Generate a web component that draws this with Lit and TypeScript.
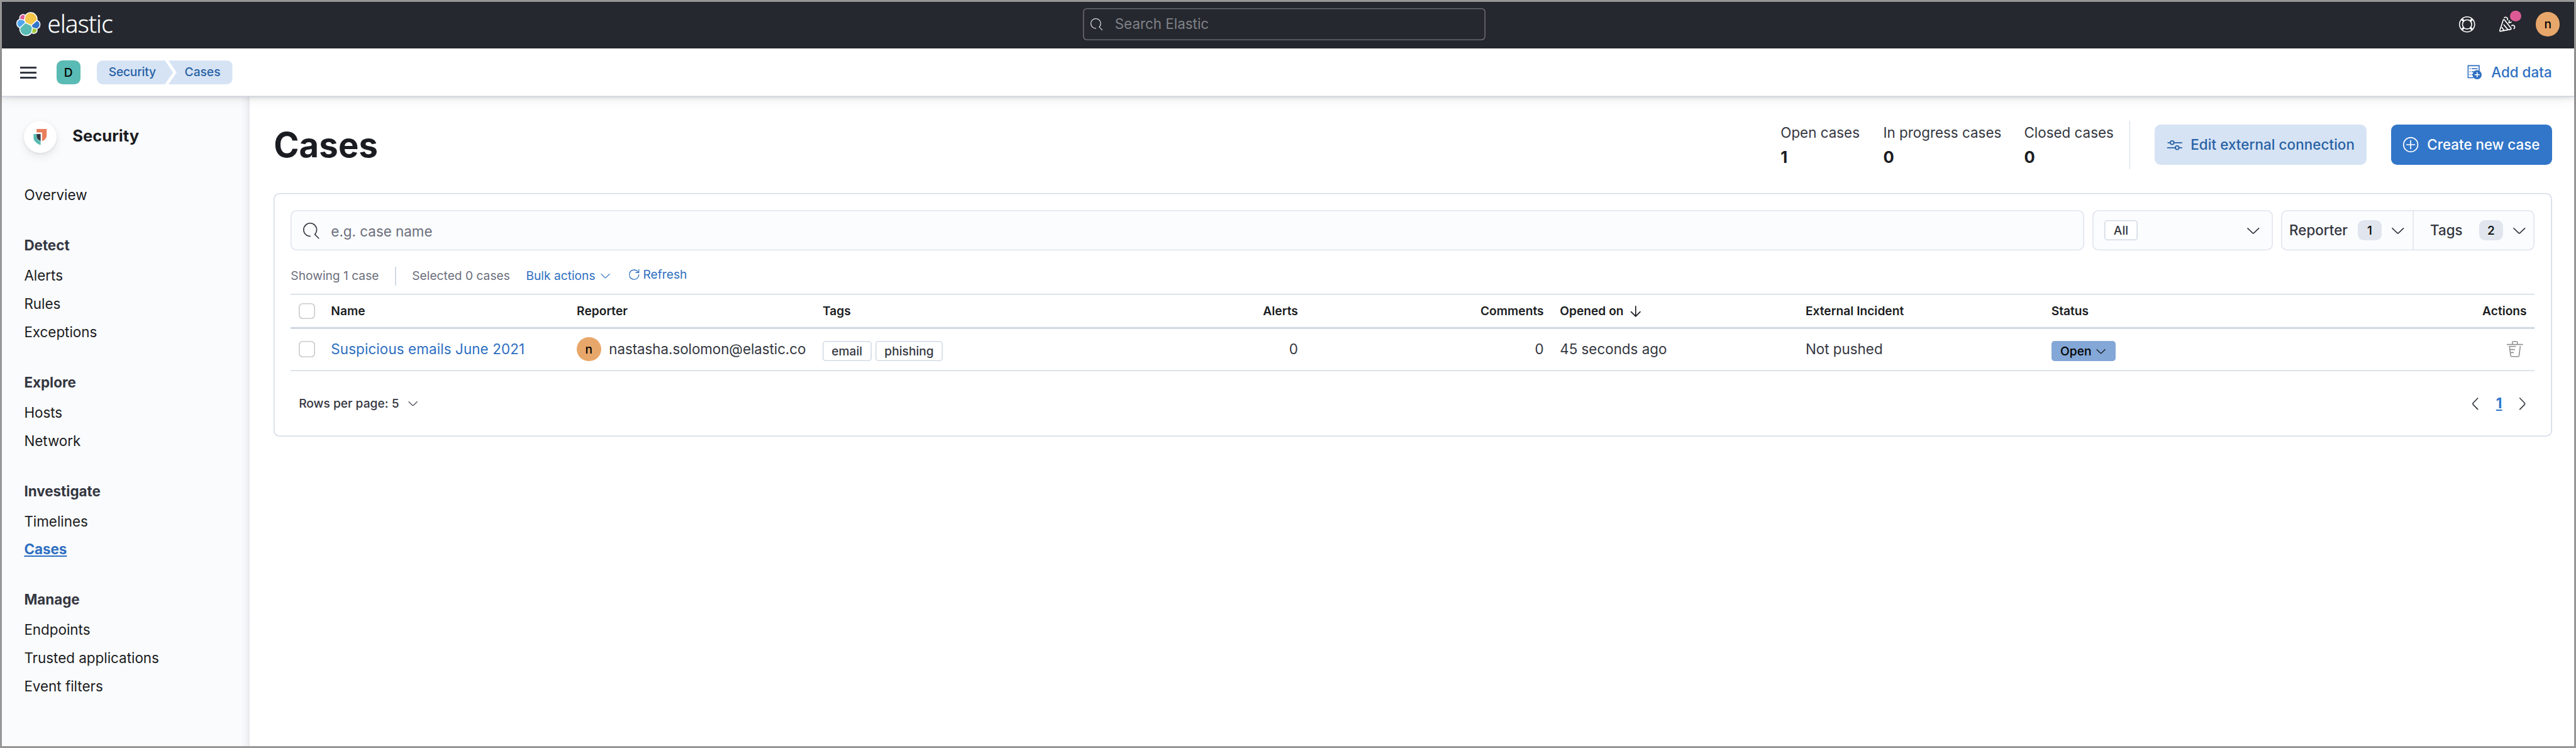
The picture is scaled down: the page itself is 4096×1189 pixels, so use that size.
import { LitElement, html, css, svg } from "lit";
import { customElement } from "lit/decorators.js";

const icon = (cls: string, body: unknown, box = "0 0 16 16") =>
  html`<svg class="icon ${cls}" viewBox=${box} aria-hidden="true">${body}</svg>`;

const searchGlyph = svg`<path fill="currentColor" d="M11.271 11.978l3.872 3.873a.502.502 0 00.708 0 .502.502 0 000-.708l-3.565-3.564c2.38-2.747 2.267-6.923-.342-9.532-2.73-2.73-7.17-2.73-9.898 0-2.728 2.729-2.728 7.17 0 9.9a6.955 6.955 0 004.949 2.05.5.5 0 000-1 5.96 5.96 0 01-4.242-1.757 6.01 6.01 0 010-8.486 6.004 6.004 0 018.484 0 6.01 6.01 0 010 8.486.5.5 0 00.034.738z"/>`;
const chevronDown = svg`<path class="line" d="M2.5 5.5l4.7 4.6a1.15 1.15 0 001.6 0l4.7-4.6"/>`;
const chevronLeft = svg`<path class="line" d="M10.5 2.5L5.9 7.2a1.15 1.15 0 000 1.6l4.6 4.7"/>`;
const chevronRight = svg`<path class="line" d="M5.5 2.5l4.6 4.7a1.15 1.15 0 010 1.6l-4.6 4.7"/>`;

const clusterPaths = [
  ["#f4c64a", "M12.58 13.787l7.002 3.211 7.066-6.213a7.849 7.849 0 00.152-1.557c0-4.311-3.51-7.817-7.826-7.817a7.825 7.825 0 00-6.453 3.394l-1.176 6.109 1.235 2.873z"],
  ["#59bbb3", "M5.333 21.214c-.094.511-.14 1.03-.14 1.55 0 4.325 3.52 7.843 7.849 7.843a7.84 7.84 0 006.486-3.438l1.166-6.08-1.556-2.977-7.03-3.203-6.775 6.305z"],
  ["#df5c9a", "M5.288 9.067l4.8 1.132 1.05-5.457a3.79 3.79 0 00-6.017 3.01c0 .444.017.896.167 1.315z"],
  ["#50a6ed", "M4.872 10.214c-2.145.71-3.598 2.778-3.598 5.04a5.32 5.32 0 003.408 4.95l6.734-6.087-1.236-2.642-5.308-1.261z"],
  ["#9dc93f", "M20.873 27.169a3.78 3.78 0 006.007-3.01c0-.44-.075-.876-.223-1.29l-4.796-1.121-.988 5.421z"],
  ["#3376c9", "M21.848 20.563l5.28 1.235a5.365 5.365 0 003.597-5.044 5.315 5.315 0 00-3.4-4.938l-6.904 6.046 1.427 2.701z"],
];

const navGroups = [
  { title: "", items: ["Overview"] },
  { title: "Detect", items: ["Alerts", "Rules", "Exceptions"] },
  { title: "Explore", items: ["Hosts", "Network"] },
  { title: "Investigate", items: ["Timelines", "Cases"] },
  { title: "Manage", items: ["Endpoints", "Trusted applications", "Event filters"] },
];

const stats = [
  ["open", "Open cases", "1"],
  ["progress", "In progress cases", "0"],
  ["closed", "Closed cases", "0"],
];

@customElement("app-root")
export class AppRoot extends LitElement {
  static styles = css`
    :host {
      display: block;
      height: 100vh;
      font-family: Inter, "Liberation Sans", sans-serif;
      font-size: 1.4rem;
      line-height: 2.4rem;
      color: #343741;
      white-space: nowrap;
    }
    * { box-sizing: border-box; }
    .icon { display: block; flex: none; width: 1.6rem; height: 1.6rem; overflow: visible; }
    .line { fill: none; stroke: currentColor; stroke-width: 1.05; stroke-linecap: round; stroke-linejoin: round; }
    .small { width: 1.2rem; height: 1.2rem; }

    .frame { height: 100%; padding: 0.2rem; background: #979797; display: flex; flex-direction: column; }

    .top { flex: none; height: 4.6rem; padding: 0 1.4rem 0.2rem; background: #25282f; display: grid;
      grid-template-columns: 106rem 40rem 1fr; align-items: center; color: #fff; }
    .brand { display: flex; align-items: center; gap: 0.72rem; }
    .cluster { width: 2.4rem; height: 2.4rem; }
    .cluster-rim { stroke: #fff; stroke-width: 2.5; stroke-linejoin: round; fill: #fff; }
    .wordmark { font-family: "Open Sans", "Noto Sans", sans-serif; font-weight: 300; font-size: 2.4rem; line-height: 2.4rem;
      letter-spacing: -0.04rem; -webkit-text-stroke: 0.03rem #fff; margin-bottom: 0.18rem; }
    .global-search { height: 3.2rem; border-radius: 0.4rem; box-shadow: inset 0 0 0 0.1rem #69696d;
      display: flex; align-items: center; padding-left: 0.8rem; gap: 1.2rem; color: #808186; }
    .global-search .icon { color: #dfe0e2; }
    .top-right { display: flex; align-items: center; justify-content: flex-end; }
    .cheer-wrap { position: relative; margin: 0 2rem 0 2.4rem; }
    .dot { position: absolute; left: 1.05rem; top: -0.55rem; width: 1.1rem; height: 1.1rem; border-radius: 50%; background: #dd5b95; }
    .avatar { flex: none; width: 2.4rem; height: 2.4rem; border-radius: 50%; background: #e8a76a; color: #000;
      font-size: 1.2rem; font-weight: 500; text-align: center; }

    .bar { flex: none; position: relative; z-index: 1; height: 4.8rem; padding: 0 2.2rem 0 1.8rem; display: flex; align-items: center;
      background: #fff; box-shadow: inset 0 -0.1rem 0 #cbd1df, 0 0.1rem 0.4rem rgba(0,0,0,.1), 0 0.2rem 1.2rem rgba(0,0,0,.08); }
    .menu { display: grid; gap: 0.3rem; width: 1.6rem; }
    .menu i { height: 0.2rem; background: #343741; }
    .space { width: 2.4rem; height: 2.4rem; margin: 0 1.6rem 0 2rem; border-radius: 0.6rem; background: #59bbb3; color: #000;
      font-size: 1.2rem; font-weight: 500; text-align: center; }
    .crumbs { display: flex; font-size: 1.2rem; font-weight: 500; color: #2761a5; line-height: 2.36rem; height: 2.36rem; }
    .crumb { background: #d6e3f4; }
    .crumb-first { width: 7.6rem; padding-left: 1.2rem; letter-spacing: -0.014rem; border-radius: 0.6rem 0 0 0.6rem;
      clip-path: polygon(0 0, 6.8rem 0, 100% 50%, 6.8rem 100%, 0 100%); }
    .crumb-last { width: 6.35rem; margin-left: -0.45rem; padding-left: 1.6rem; border-radius: 0 0.6rem 0.6rem 0;
      clip-path: polygon(0 0, 100% 0, 100% 100%, 0 100%, 0.8rem 50%); }
    .add { margin-left: auto; display: flex; align-items: center; gap: 0.88rem; color: #2e6fc1; font-weight: 500; }

    .body { flex: 1; min-height: 0; display: flex; background: #fff; }
    .side { flex: none; width: 24.6rem; padding: 2.4rem 0 0 2.2rem; background: linear-gradient(to right, transparent calc(100% - 0.9rem), rgba(60,64,75,.03) calc(100% - 0.4rem), rgba(60,64,75,.09)), #fafbfd; color: #1a1c21; }
    .solution { display: flex; align-items: center; gap: 1.6rem; height: 3.2rem; font-size: 1.6rem; font-weight: 700; }
    .solution-name { margin-bottom: 0.2rem; }
    .disc { width: 3.2rem; height: 3.2rem; border-radius: 50%; background: #fff; display: grid; place-items: center;
      box-shadow: 0 0.1rem 0.3rem rgba(0,0,0,.08), 0 0.4rem 0.9rem rgba(0,0,0,.07); }
    .group { margin-bottom: 2.2rem; line-height: 2.8rem; }
    .group-first { margin-top: 2.82rem; }
    .group-title { font-weight: 700; color: #343741; line-height: 2.8rem; padding-bottom: 0.2rem; }
    .current { font-weight: 700; color: #2e6fc1; text-decoration: underline; text-underline-offset: 0.12rem; text-decoration-thickness: 0.1rem; }

    .main { flex: 1; min-width: 0; padding: 2.4rem 2.2rem 0 2.4rem; }
    .head { display: flex; height: 4.8rem; align-items: center; margin-bottom: 2.4rem; }
    .title { margin: 0; flex: 1; font-size: 3.4rem; font-weight: 700; line-height: 4.8rem; letter-spacing: 0.01rem; color: #1a1c21; }
    .open { width: 10.2rem; }
    .progress { width: 14rem; }
    .closed { width: 10.45rem; }
    .value { padding-top: 0.05rem; margin-bottom: -0.05rem; font-size: 1.6rem; font-weight: 700; color: #1a1c21; }
    .rule { width: 0.1rem; height: 4.8rem; background: #d3dae6; margin-right: 2.4rem; }
    .button { height: 4rem; border-radius: 0.6rem; display: flex; align-items: center; justify-content: center; gap: 0.8rem; font-weight: 500; }
    .button-soft { width: 21.1rem; background: #d6e3f4; color: #2761a5; margin-right: 2.4rem; letter-spacing: 0.004rem; }
    .button-fill { width: 16rem; background: #3276c9; color: #fff; }

    .panel { height: 24.2rem; padding: 1.7rem; border-radius: 0.6rem; box-shadow: inset 0 0 0 0.1rem #d3dae6; }
    .filters { display: flex; gap: 0.8rem; height: 4rem; }
    .field { display: flex; align-items: center; border-radius: 0.6rem; background: #fbfcfe; box-shadow: inset 0 0 0 0.1rem #e2e4ef; }
    .query { flex: 1; padding-left: 1.2rem; gap: 1.2rem; color: #6b6f7c; }
    .query .icon { color: #343741; }
    .query-text { margin-top: 0.2rem; }
    .select { width: 17.95rem; padding: 0 1.2rem; justify-content: space-between; }
    .badge { height: 2rem; line-height: 2rem; padding: 0 0.9rem; font-size: 1.2rem; font-weight: 500; border-radius: 0.3rem;
      background: #fff; box-shadow: inset 0 0 0 0.1rem #d3dae6; color: #343741; }
    .facets { width: 25.2rem; font-weight: 500; }
    .facet { height: 100%; display: flex; align-items: center; }
    .facet-reporter { width: 13.15rem; padding-left: 0.8rem; box-shadow: inset -0.1rem 0 0 #e2e4ef; }
    .facet-tags { flex: 1; padding-left: 1.65rem; }
    .label { flex: 1; }
    .count { width: 2.4rem; height: 2rem; line-height: 2rem; border-radius: 0.6rem; background: #e0e5ee; color: #000; font-size: 1.2rem; text-align: center; margin-right: 0.8rem; }
    .facet .icon { margin-right: 0.75rem; }

    .utility { display: flex; margin: 1.6rem 0 0.8rem; height: 1.9rem; font-size: 1.2rem; line-height: 1.8rem; color: #6b6f7c; }
    .utility-rule { width: 0.1rem; background: #d3dae6; margin: 0 1.6rem; }
    .utility .link { margin-left: 1.6rem; display: flex; align-items: center; gap: 0.4rem; height: 1.8rem; }
    .utility .link.refresh { height: 1.6rem; margin-left: 1.7rem; gap: 0.25rem; }
    .link { color: #2e6fc1; }

    .grid { display: grid; grid-template-columns: 3.2rem repeat(9, minmax(0, 1fr)); align-items: center; }
    .cell { padding: 0 0.8rem; display: flex; align-items: center; }
    .num { justify-content: flex-end; }
    .thead { height: 3.5rem; padding: 0.1rem 0 0.2rem; font-size: 1.2rem; font-weight: 600; color: #1a1c21;
      box-shadow: inset 0 0.1rem 0 #d3dae6, inset 0 -0.2rem 0 #d3dae6; }
    .trow { height: 4.2rem; padding-bottom: 0.2rem; box-shadow: inset 0 -0.1rem 0 #d3dae6; }
    .check { width: 1.6rem; height: 1.6rem; border-radius: 0.4rem; box-shadow: inset 0 0 0 0.1rem #c9cbcd; }
    .case-name { letter-spacing: 0.0067rem; }
    .reporter { gap: 0.8rem; letter-spacing: -0.004rem; }
    .tags { gap: 0.4rem; }
    .low { margin-top: 0.4rem; }
    .status { background: #83a7d6; box-shadow: none; color: #000; display: flex; align-items: center; gap: 0.32rem; }
    .bin { color: #929292; margin-right: 0.4rem; }
    .sort { margin-left: 0.4rem; }

    .foot { height: 6.4rem; display: flex; align-items: center; justify-content: space-between; padding: 0 0.4rem 0 0.8rem; }
    .rows { display: flex; align-items: center; gap: 0.8rem; font-size: 1.2rem; font-weight: 500; }
    .pager { display: flex; align-items: center; }
    .page { width: 3.1rem; text-align: center; font-weight: 700; color: #2e76cc; text-decoration: underline; text-underline-offset: 0.12rem; text-decoration-thickness: 0.1rem; }
  `;

  private top() {
    return html`
      <header class="top">
        <div class="brand">
          ${icon("cluster", svg`
            <g class="cluster-rim">${clusterPaths.map(([, d]) => svg`<path d=${d}/>`)}</g>
            ${clusterPaths.map(([fill, d]) => svg`<path fill=${fill} d=${d}/>`)}`, "0 0 32 32")}
          <span class="wordmark">elastic</span>
        </div>
        <div class="global-search">${icon("small", searchGlyph)}<span>Search Elastic</span></div>
        <div class="top-right">
          ${icon("", svg`
            <g fill="none" stroke="currentColor">
              <circle cx="8" cy="8" r="7.5"/><circle cx="8" cy="8" r="4.6"/>
              <path stroke-width="2.1" d="M3 3l1.7 1.7M13 3l-1.7 1.7M3 13l1.7-1.7M13 13l-1.7-1.7"/>
            </g>`)}
          <div class="cheer-wrap">
            ${icon("", svg`
              <g class="line">
                <path d="M4 3.5L.5 14a.6.6 0 00.7.8l10.2-1.9a.6.6 0 00.3-1L5 3.3a.6.6 0 00-1 .2z"/>
                <path d="M2.6 11l2 2.9M4.6 8.4l4 4.8"/>
                <path d="M5 1.3A2 2 0 018.2 3.4M12.3 9.2A1.8 1.8 0 1114.6 12.2M9.9 4.2l-.4 2.3 2.4-.8"/>
              </g>`)}
            <span class="dot"></span>
          </div>
          <div class="avatar">n</div>
        </div>
      </header>`;
  }

  private bar() {
    return html`
      <div class="bar">
        <div class="menu"><i></i><i></i><i></i></div>
        <div class="space">D</div>
        <nav class="crumbs"><span class="crumb crumb-first">Security</span><span class="crumb crumb-last">Cases</span></nav>
        <div class="add">
          ${icon("", svg`
            <path fill="none" stroke="currentColor" d="M7 13.400H1.500v-11.900h11V7"/>
            <path stroke="currentColor" d="M3 4.500h1M5 4.500h6M3 7.500h1M5 7.500h3.500M3 10.500h1M5 10.500h2"/>
            <circle cx="10.500" cy="10.500" r="4.500" fill="currentColor"/>
            <path stroke="#fff" d="M10.500 8v5M8 10.500h5"/>`)}
          <span>Add data</span>
        </div>
      </div>`;
  }

  private side() {
    return html`
      <aside class="side">
        <div class="solution">
          <span class="disc">${icon("", svg`
            <path fill="#e97f5b" d="M9 0h20v12.500c0 5.500-3.500 10-9 11.500V7H9z"/>
            <path fill="#343741" d="M9 10h8v14c-5-2-8-5-8-9z"/>
            <path fill="#59bbb3" d="M9 15.500V10H3v8c0 5.500 6 11 14 14v-8c-5-1.500-8-4.500-8-8.500z"/>`, "0 0 32 32")}</span>
          <span class="solution-name">Security</span>
        </div>
        ${navGroups.map((g) => html`
          <div class="group ${g.title ? "" : "group-first"}">
            ${g.title ? html`<div class="group-title">${g.title}</div>` : null}
            ${g.items.map((i) => html`<div><span class=${i === "Cases" ? "current" : ""}>${i}</span></div>`)}
          </div>`)}
      </aside>`;
  }

  private head() {
    return html`
      <div class="head">
        <h1 class="title">Cases</h1>
        ${stats.map(([cls, label, value]) => html`<div class=${cls}><div>${label}</div><div class="value">${value}</div></div>`)}
        <div class="rule"></div>
        <div class="button button-soft">
          ${icon("", svg`<g fill="none" stroke="currentColor" stroke-width="1.1">
            <path d="M1 5.500h2.700M7.300 5.500H15.500M.5 10.500h8.200M12.300 10.500H15.500"/>
            <circle cx="5.500" cy="5.500" r="1.800"/><circle cx="10.500" cy="10.500" r="1.800"/></g>`)}
          <span>Edit external connection</span>
        </div>
        <div class="button button-fill">
          ${icon("", svg`<g class="line"><circle cx="7.600" cy="7.500" r="7.100"/><path d="M7.600 3.500v8M3.600 7.500h8"/></g>`)}
          <span>Create new case</span>
        </div>
      </div>`;
  }

  private filters() {
    return html`
      <div class="filters">
        <div class="field query">${icon("", searchGlyph)}<span class="query-text">e.g. case name</span></div>
        <div class="field select"><span class="badge">All</span>${icon("", chevronDown)}</div>
        <div class="field facets">
          <div class="facet facet-reporter"><span class="label">Reporter</span><span class="count">1</span>${icon("", chevronDown)}</div>
          <div class="facet facet-tags"><span class="label">Tags</span><span class="count">2</span>${icon("", chevronDown)}</div>
        </div>
      </div>
      <div class="utility">
        <span>Showing 1 case</span>
        <span class="utility-rule"></span>
        <span>Selected 0 cases</span>
        <span class="link"><span>Bulk actions</span>${icon("small", chevronDown)}</span>
        <span class="link refresh">${icon("small", svg`<path class="line" d="M14 8a6.300 6.300 0 11-2.200-4.800L13.500 5M14 1.200V5.300H9.800"/>`)}<span>Refresh</span></span>
      </div>`;
  }

  private table() {
    return html`
      <div class="grid thead">
        <div class="cell"><span class="check"></span></div>
        <div class="cell">Name</div>
        <div class="cell">Reporter</div>
        <div class="cell">Tags</div>
        <div class="cell num">Alerts</div>
        <div class="cell num">Comments</div>
        <div class="cell">Opened on ${icon("sort", svg`<path class="line" d="M8 3v9.800M3.500 8.500L8 13l4.500-4.500"/>`)}</div>
        <div class="cell">External Incident</div>
        <div class="cell">Status</div>
        <div class="cell num">Actions</div>
      </div>
      <div class="grid trow">
        <div class="cell"><span class="check"></span></div>
        <div class="cell link case-name">Suspicious emails June 2021</div>
        <div class="cell reporter"><span class="avatar">n</span><span>nastasha.solomon@elastic.co</span></div>
        <div class="cell tags"><span class="badge low">email</span><span class="badge low">phishing</span></div>
        <div class="cell num">0</div>
        <div class="cell num">0</div>
        <div class="cell">45 seconds ago</div>
        <div class="cell">Not pushed</div>
        <div class="cell"><span class="badge status low">Open ${icon("small", chevronDown)}</span></div>
        <div class="cell num">${icon("bin", svg`<g fill="none" stroke="currentColor">
          <path d="M0 3.500h16M5.500 3.500v-2a1 1 0 011-1h3a1 1 0 011 1v2"/>
          <path d="M2.600 5l1.200 9.500a1.100 1.100 0 001.100 1h6.200a1.100 1.100 0 001.100-1L13.400 5M2.600 5.500H9M3 8.500h5M3.300 11.500H7"/></g>`)}</div>
      </div>
      <div class="foot">
        <div class="rows"><span>Rows per page: 5</span>${icon("small", chevronDown)}</div>
        <div class="pager">${icon("", chevronLeft)}<span class="page">1</span>${icon("", chevronRight)}</div>
      </div>`;
  }

  render() {
    return html`
      <div class="frame">
        ${this.top()} ${this.bar()}
        <div class="body">
          ${this.side()}
          <main class="main">
            ${this.head()}
            <section class="panel">${this.filters()} ${this.table()}</section>
          </main>
        </div>
      </div>`;
  }
}
